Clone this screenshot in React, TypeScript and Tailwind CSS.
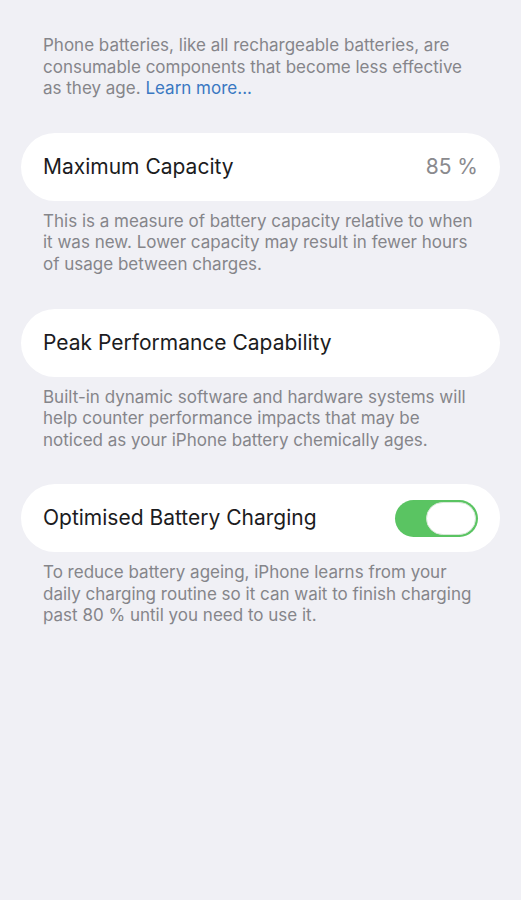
export default function App() {
  return (
    <div
      className="min-h-[900px] w-full bg-[#f0f0f5] pt-[35px]"
      style={{ fontFamily: 'Inter, "Noto Sans", sans-serif' }}
    >
      <p className="px-[43px] text-[17px] leading-[21.5px] text-[#85858a]">
        Phone batteries, like all rechargeable batteries, are
        <br />
        consumable components that become less effective
        <br />
        as they age. <span className="text-[#3a78c2]">Learn more...</span>
      </p>

      <div className="mt-[33px] px-[21px]">
        <div className="flex h-[68px] items-center justify-between rounded-[34px] bg-white pl-[22px] pr-[22px]">
          <span className="text-[21px] text-[#1c1c1e]">Maximum Capacity</span>
          <span className="text-[21px] text-[#8a8a8e]">85 %</span>
        </div>
      </div>
      <p className="mt-[10px] px-[43px] text-[17px] leading-[21.5px] text-[#85858a]">
        This is a measure of battery capacity relative to when
        <br />
        it was new. Lower capacity may result in fewer hours
        <br />
        of usage between charges.
      </p>

      <div className="mt-[33.5px] px-[21px]">
        <div className="flex h-[68px] items-center rounded-[34px] bg-white pl-[22px]">
          <span className="text-[21px] text-[#1c1c1e]">Peak Performance Capability</span>
        </div>
      </div>
      <p className="mt-[10px] px-[43px] text-[17px] leading-[21.5px] text-[#85858a]">
        Built-in dynamic software and hardware systems will
        <br />
        help counter performance impacts that may be
        <br />
        noticed as your iPhone battery chemically ages.
      </p>

      <div className="mt-[33px] px-[21px]">
        <div className="flex h-[68px] items-center justify-between rounded-[34px] bg-white pl-[22px] pr-[22px]">
          <span className="text-[21px] text-[#1c1c1e]">Optimised Battery Charging</span>
          <div className="flex h-[37px] w-[83px] items-center justify-end rounded-full bg-[#5ac462] p-[2px]">
            <div className="h-[33px] w-[50px] rounded-full border border-[#d8e8d8] bg-white" />
          </div>
        </div>
      </div>
      <p className="mt-[10px] px-[43px] text-[17px] leading-[21.5px] text-[#85858a]">
        To reduce battery ageing, iPhone learns from your
        <br />
        daily charging routine so it can wait to finish charging
        <br />
        past 80 % until you need to use it.
      </p>
    </div>
  )
}
